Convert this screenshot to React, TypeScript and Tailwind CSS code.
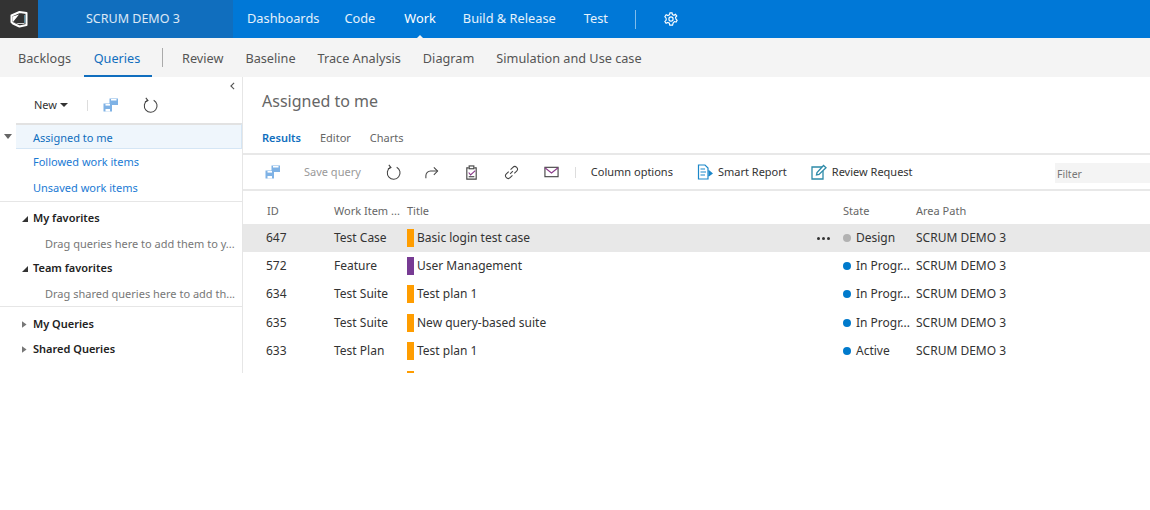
const font = { fontFamily: '"Noto Sans", "Open Sans", sans-serif' };

function Logo() {
  return (
    <svg viewBox="0 0 18 18" className="h-[18px] w-[18px]">
      <path d="M1.5 5.5 L9.5 2 L16.5 3 V15 L9.5 16.5 L3 13.5 L1.5 12 Z" fill="none" stroke="#fff" strokeWidth="2" strokeLinejoin="round" />
      <path d="M9 4.5 L2.5 6.5 V11.5 L6 13 H14.5 V13.8 H8 L3 12 Z" fill="#fff" />
      <path d="M14.8 5 V13" stroke="#7fd0f0" strokeWidth="0.8" />
    </svg>
  );
}

function RunIcon({ className }: { className?: string }) {
  return (
    <svg viewBox="0 0 16 14" className={className} fill="#7fb2e5">
      <rect x="6.5" y="0.5" width="8.5" height="6.5" />
      <rect x="8" y="1" width="5.5" height="1.5" fill="#fff" />
      <rect x="0.5" y="5.5" width="8.5" height="8" />
      <rect x="2.5" y="6" width="4.5" height="1.6" fill="#fff" />
      <rect x="2.5" y="11" width="4.5" height="2.5" fill="#fff" />
    </svg>
  );
}

function Refresh() {
  return (
    <svg viewBox="0 0 16 16" className="h-[17px] w-[17px]" fill="none" stroke="#444" strokeWidth="1">
      <path d="M5 3.2 A6 6 0 1 0 11 3" />
      <path d="M3.6 0.8 L5.6 3.4 L2.8 4.6" />
    </svg>
  );
}

function ToolIcon({ kind }: { kind: string }) {
  if (kind === "redo")
    return (
      <svg viewBox="0 0 16 16" className="h-[15px] w-[15px]" fill="none" stroke="#444" strokeWidth="1.1">
        <path d="M14.5 6.5 H7 A5 5 0 0 0 2 11.5 V14" />
        <path d="M10.5 2.5 L14.5 6.5 L10.5 10.5" />
      </svg>
    );
  if (kind === "task")
    return (
      <svg viewBox="0 0 16 16" className="h-[15px] w-[15px]" fill="none" stroke="#444" strokeWidth="1.2">
        <path d="M5 3 H3 V15 H13 V3 H11" />
        <rect x="5.5" y="1" width="5" height="3" />
        <path d="M5 8 L7 10.5 L12 6" stroke="#8a3a8a" />
        <path d="M5 12.5 H11" />
      </svg>
    );
  if (kind === "link")
    return (
      <svg viewBox="0 0 16 16" className="h-[15px] w-[15px]" fill="none" stroke="#444" strokeWidth="1.1">
        <path d="M6.5 9.5 L9.5 6.5" />
        <path d="M7 5 L9.5 2.5 A2.4 2.4 0 0 1 13.5 6.5 L11 9" />
        <path d="M9 11 L6.5 13.5 A2.4 2.4 0 0 1 2.5 9.5 L5 7" />
      </svg>
    );
  return (
    <svg viewBox="0 0 16 12" className="h-[12px] w-[15px]" fill="none" stroke="#444" strokeWidth="1.2">
      <rect x="1" y="1" width="14" height="10" />
      <path d="M1 1.5 L8 7 L15 1.5" stroke="#8a3a8a" />
    </svg>
  );
}

function Triangle({ dir }: { dir: "open" | "closed" }) {
  return dir === "open" ? (
    <svg viewBox="0 0 6 6" className="h-[6px] w-[6px]"><path d="M6 0 V6 H0 Z" fill="#333" /></svg>
  ) : (
    <svg viewBox="0 0 6 8" className="h-[7px] w-[5px]"><path d="M0 0 L5.5 4 L0 8 Z" fill="#777" /></svg>
  );
}

const rows = [
  { id: "647", type: "Test Case", color: "bg-[#ff9d00]", title: "Basic login test case", state: "Design", dot: "bg-[#b2b2b2]", active: true },
  { id: "572", type: "Feature", color: "bg-[#773b93]", title: "User Management", state: "In Progr...", dot: "bg-[#007acc]" },
  { id: "634", type: "Test Suite", color: "bg-[#ff9d00]", title: "Test plan 1", state: "In Progr...", dot: "bg-[#007acc]" },
  { id: "635", type: "Test Suite", color: "bg-[#ff9d00]", title: "New query-based suite", state: "In Progr...", dot: "bg-[#007acc]" },
  { id: "633", type: "Test Plan", color: "bg-[#ff9d00]", title: "Test plan 1", state: "Active", dot: "bg-[#007acc]" },
];

export default function App() {
  return (
    <div className="h-[510px] w-[1150px] overflow-hidden bg-white text-[11px] text-[#333]" style={font}>
      {/* top bar */}
      <div className="flex h-[38px] items-center bg-[#0078d7] text-[12.8px] text-white/90">
        <div className="flex h-full w-[38px] items-center justify-center bg-[#333]">
          <Logo />
        </div>
        <div className="flex h-full w-[195px] items-center bg-[#106ebe] pl-[48px] text-[12.5px] text-white/85">SCRUM DEMO 3</div>
        <div className="ml-[14px] flex items-center">
          <span>Dashboards</span>
          <span className="ml-[25px]">Code</span>
          <span className="relative ml-[29px] text-white">
            Work
            <span className="absolute left-1/2 top-[26px] h-0 w-0 -translate-x-1/2 border-x-[5px] border-b-[5px] border-x-transparent border-b-[#f4f4f4]" />
          </span>
          <span className="ml-[27px]">Build &amp; Release</span>
          <span className="ml-[28px]">Test</span>
        </div>
        <div className="ml-[27px] h-[19px] w-px bg-white/50" />
        <svg viewBox="0 0 16 16" className="ml-[28px] h-[14px] w-[14px]" fill="none" stroke="#fff" strokeWidth="1.3">
          <circle cx="8" cy="8" r="2.4" />
          <path d="M6.8 1 H9.2 L9.6 3 L11.4 3.8 L13.1 2.7 L14.6 4.6 L13.2 6 L13.6 8 L15 9.4 L13.8 11.4 L11.9 10.9 L10.4 12.6 L9.8 15 H6.6 L6.1 12.8 L4.4 12 L2.4 12.9 L1 10.8 L2.5 9.2 L2.4 7 L1 5.5 L2.5 3.2 L4.5 4 L6.3 3 Z" />
        </svg>
      </div>

      {/* second nav */}
      <div className="flex h-[39px] items-stretch bg-[#f4f4f4] pl-[18px] text-[12.7px] text-[#555]">
        <span className="flex w-[54px] items-center whitespace-nowrap pt-[2px]">Backlogs</span>
        <span className="ml-[12px] flex w-[68px] items-center justify-center border-b-2 border-[#106ebe] pr-[2px] pt-[4px] text-[#106ebe]">Queries</span>
        <span className="ml-[10px] mt-[10px] h-[19px] w-px bg-[#aaa]" />
        <div className="ml-[19px] flex items-center gap-[22px] pt-[2px]">
          <span>Review</span>
          <span>Baseline</span>
          <span>Trace Analysis</span>
          <span>Diagram</span>
          <span>Simulation and Use case</span>
        </div>
      </div>

      <div className="flex h-[296px] overflow-hidden">
        {/* left panel */}
        <div className="relative w-[243px] shrink-0 border-r border-[#e6e6e6]">
          <svg viewBox="0 0 6 10" className="absolute right-[7px] top-[5px] h-[8px] w-[5px]" fill="none" stroke="#555" strokeWidth="1.4">
            <path d="M5 1 L1 5 L5 9" />
          </svg>
          <div className="flex h-[46px] items-center pl-[34px] pt-[10px]">
            <span className="text-[#333]">New</span>
            <span className="ml-[3px] h-0 w-0 border-x-[4px] border-t-[4px] border-x-transparent border-t-[#333]" />
            <span className="ml-[19px] h-[11px] w-px bg-[#ddd]" />
            <RunIcon className="ml-[15px] h-[14px] w-[16px]" />
            <span className="ml-[23px]"><Refresh /></span>
          </div>
          <div className="relative">
            <span className="absolute left-[4px] top-[11px] h-0 w-0 border-x-[4.5px] border-t-[5px] border-x-transparent border-t-[#666]" />
            <div className="ml-[16px] flex h-[26px] items-center border-t-2 border-b border-r border-t-[#e2e2e2] border-b-[#d5e6f5] border-r-[#d5e6f5] bg-[#eff6fc] pl-[17px] pt-[3px] text-[#106ebe]">Assigned to me</div>
          </div>
          <div className="flex h-[25px] items-center pl-[33px] pt-[2px] text-[#1a7ad4]">Followed work items</div>
          <div className="flex h-[26px] items-center pl-[33px] pt-[2px] text-[#1a7ad4]">Unsaved work items</div>
          <div className="mt-[1px] border-t border-[#e6e6e6]" />
          <div className="flex h-[33px] items-center gap-[5px] pl-[22px] font-semibold text-[#222]">
            <Triangle dir="open" />
            My favorites
          </div>
          <div className="flex h-[18px] items-center whitespace-nowrap pl-[45px] text-[#777]">Drag queries here to add them to y...</div>
          <div className="flex h-[32px] items-center gap-[5px] pb-[1px] pl-[22px] font-semibold text-[#222]">
            <Triangle dir="open" />
            Team favorites
          </div>
          <div className="flex h-[18px] items-center whitespace-nowrap pl-[45px] text-[#777]">Drag shared queries here to add th...</div>
          <div className="mt-[3px] border-t border-[#e6e6e6]" />
          <div className="flex h-[34px] items-center gap-[6px] pl-[22px] pt-[1px] font-semibold text-[#222]">
            <Triangle dir="closed" />
            My Queries
          </div>
          <div className="flex h-[16px] items-center gap-[6px] pl-[22px] font-semibold text-[#222]">
            <Triangle dir="closed" />
            Shared Queries
          </div>
        </div>

        {/* main */}
        <div className="min-w-0 flex-1">
          <div className="flex h-[48px] items-center pl-[19px] text-[16px] text-[#666]">Assigned to me</div>
          <div className="flex h-[28px] items-center gap-[19px] pb-[2px] pl-[19px]">
            <span className="font-semibold text-[#106ebe]">Results</span>
            <span className="text-[#666]">Editor</span>
            <span className="text-[#666]">Charts</span>
          </div>
          <div className="flex h-[38px] items-center border-y-2 border-[#e8e8e8] pl-[22px]">
            <RunIcon className="h-[14px] w-[16px]" />
            <span className="ml-[23px] text-[#999]">Save query</span>
            <span className="ml-[24px]"><Refresh /></span>
            <span className="ml-[22px]"><ToolIcon kind="redo" /></span>
            <span className="ml-[25px]"><ToolIcon kind="task" /></span>
            <span className="ml-[25px]"><ToolIcon kind="link" /></span>
            <span className="ml-[25px]"><ToolIcon kind="mail" /></span>
            <span className="ml-[16px] h-[11px] w-px bg-[#ddd]" />
            <span className="ml-[15px] text-[#333]">Column options</span>
            <svg viewBox="0 0 16 16" className="ml-[24px] h-[16px] w-[16px]" fill="none" stroke="#1b87c9" strokeWidth="1.2">
              <path d="M1.5 1 H8 L11 4 V15 H1.5 Z" />
              <path d="M3.5 5 H8 M3.5 8 H9 M3.5 11 H8" />
              <path d="M11.5 6.5 L15 9.5 L11.5 12" fill="#1b87c9" />
            </svg>
            <span className="ml-[5px] text-[#333]">Smart Report</span>
            <svg viewBox="0 0 16 16" className="ml-[24px] h-[16px] w-[16px]" fill="none" stroke="#2d8aa8" strokeWidth="1.3">
              <path d="M11 3 H1 V15 H12 V7" />
              <path d="M5.5 11 L6 8.5 L12.5 1.5 L15 3.8 L8 10.5 Z" />
            </svg>
            <span className="ml-[5px] text-[#333]">Review Request</span>
            <div className="ml-auto mt-[2px] flex h-[20px] w-[95px] items-center bg-[#f4f4f4] pl-[2px] pt-[3px] text-[10.5px] text-[#777]">Filter</div>
          </div>
          <div className="flex h-[33px] items-center pt-[8px] text-[#666]">
            <span className="w-[91px] shrink-0 pl-[24px]">ID</span>
            <span className="w-[73px] shrink-0 whitespace-nowrap">Work Item ...</span>
            <span className="w-[436px] shrink-0">Title</span>
            <span className="w-[73px] shrink-0">State</span>
            <span>Area Path</span>
          </div>
          {rows.map((r) => (
            <div key={r.id} className={`flex h-[28.2px] items-center text-[12px] ${r.active ? "bg-[#e8e8e8]" : ""}`}>
              <span className="w-[91px] shrink-0 pl-[23px]">{r.id}</span>
              <span className="w-[73px] shrink-0">{r.type}</span>
              <span className={`h-[18px] w-[7px] shrink-0 ${r.color}`} />
              <span className="ml-[3px] w-[400px] shrink-0">{r.title}</span>
              <span className="flex w-[26px] shrink-0 items-center gap-[2px]">
                {r.active && (
                  <>
                    <i className="h-[3px] w-[3px] rounded-full bg-[#333]" />
                    <i className="h-[3px] w-[3px] rounded-full bg-[#333]" />
                    <i className="h-[3px] w-[3px] rounded-full bg-[#333]" />
                  </>
                )}
              </span>
              <span className="flex w-[73px] shrink-0 items-center gap-[5px]">
                <i className={`h-[8px] w-[8px] rounded-full ${r.dot}`} />
                {r.state}
              </span>
              <span>SCRUM DEMO 3</span>
            </div>
          ))}
          <div className="ml-[164px] mt-[6px] h-[18px] w-[7px] bg-[#ff9d00]" />
        </div>
      </div>
    </div>
  );
}
